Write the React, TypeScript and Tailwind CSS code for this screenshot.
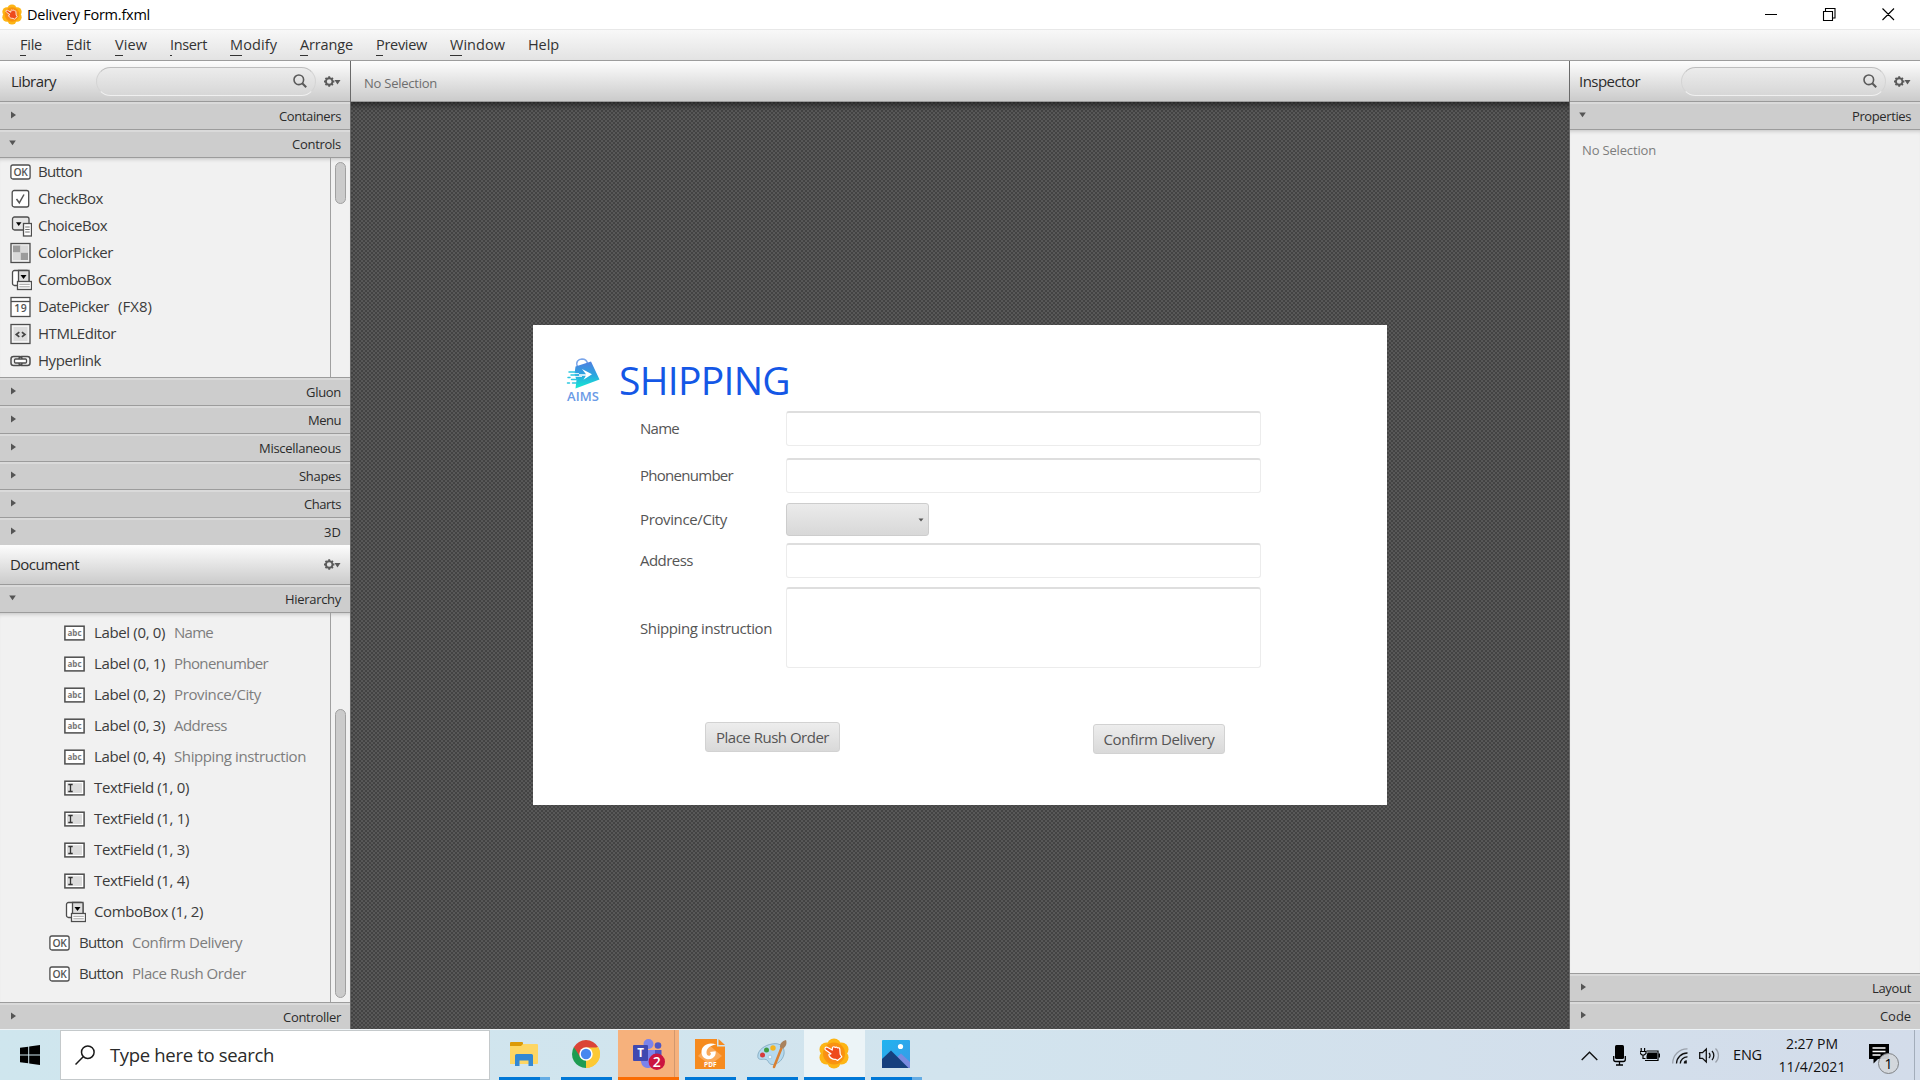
import { ReactNode, useLayoutEffect, useRef } from 'react';

/* Text that is tracked so that it fills the width given by its class. */
function T({ children, className }: { children: string; className: string }) {
  const outer = useRef<HTMLSpanElement>(null);
  const inner = useRef<HTMLSpanElement>(null);
  useLayoutEffect(() => {
    if (!outer.current || !inner.current) return;
    inner.current.style.letterSpacing = '0px';
    const extra = outer.current.clientWidth - inner.current.getBoundingClientRect().width;
    inner.current.style.letterSpacing = `${extra / children.length}px`;
  }, [children]);
  return (
    <span ref={outer} className={`block shrink-0 whitespace-pre ${className}`}>
      <span ref={inner} className="inline-block">{children}</span>
    </span>
  );
}

function SceneBuilderIcon({ className }: { className: string }) {
  return (
    <svg viewBox="0 0 30 30" className={className}>
      <g fill="#fdb515">
        <circle cx="15" cy="7" r="7" /><circle cx="22.5" cy="11" r="7" /><circle cx="22.5" cy="19" r="7" />
        <circle cx="15" cy="23" r="7" /><circle cx="7.5" cy="19" r="7" /><circle cx="7.5" cy="11" r="7" />
      </g>
      <circle cx="15" cy="15" r="11" fill="#f9940f" />
      <circle cx="15" cy="15" r="8.5" fill="#fb8a1a" />
      <path d="M6 9.800c.3-1.500 1.800-1.500 2.800-.8l4.400 2.600.3-2.600c.8-1.200 2-.8 2.600 0 .8-.8 2-.5 2.500.4 1-.4 2 0 2.200 1.200l.4 5.200 1.600 2.600-4.300 3.600-2-1.200c-3 .2-5-1-6.300-3.400-.8-1.300-.2-2.200 1.400-1.800L12 15.300 7 11.800c-.8-.5-1.200-1.200-1-2z" fill="#ee4a1c" stroke="#fff" strokeWidth="1.200" strokeLinejoin="round" />
    </svg>
  );
}

function SearchIcon() {
  return (
    <svg viewBox="0 0 14 14" className="h-[14px] w-[14px]" fill="none" stroke="#5a5a5a" strokeWidth="1.600">
      <circle cx="5.800" cy="5.800" r="4.800" /><path d="M9.200 9.200 13.200 13.300" strokeWidth="2" />
    </svg>
  );
}

function Gear() {
  return (
    <svg viewBox="0 0 17 11" className="h-[11px] w-[17px]">
      <circle cx="5.200" cy="5.500" r="3.300" fill="none" stroke="#5a5a5a" strokeWidth="1.900" />
      <path d="M5.200.3v2M5.200 8.700v2M0 5.500h2M8.400 5.500h2M1.500 1.800l1.300 1.300M7.600 7.900l1.300 1.300M8.900 1.800 7.600 3.100M2.800 7.900 1.500 9.200" stroke="#5a5a5a" strokeWidth="1.900" />
      <path d="M10.500 4h6l-3 4.500z" fill="#5a5a5a" />
    </svg>
  );
}

type Kind = 'button' | 'check' | 'choice' | 'color' | 'combo' | 'date' | 'html' | 'link' | 'label' | 'text';

function ControlIcon({ kind }: { kind: Kind }) {
  const s = '#4d4d4d';
  return (
    <svg viewBox="0 0 22 22" className="h-[22px] w-[22px] shrink-0" fill="none" stroke={s} strokeWidth="1.300">
      {kind === 'button' && (<>
        <rect x=".9" y="4" width="19.200" height="14" rx="2" fill="#fff" />
        <text x="10.500" y="14.700" textAnchor="middle" fontSize="10.300" letterSpacing="-.3" stroke="none" fill="#555" fontWeight="600" fontFamily="Open Sans, sans-serif">OK</text>
      </>)}
      {kind === 'check' && (<>
        <rect x="2.200" y="2.500" width="16.500" height="16.500" rx="2" fill="#fff" />
        <path d="M6.500 11l2.800 3.800L14 6.500" stroke="#555" strokeWidth="1.500" />
      </>)}
      {kind === 'choice' && (<>
        <rect x="2.500" y="2" width="16.500" height="13" rx="2" fill="#e6e6e6" />
        <path d="M6 7.300h5.500L8.700 11z" fill="#000" stroke="none" />
        <rect x="13.500" y="8.500" width="8" height="12.500" fill="#fff" />
        <path d="M15.200 12h4.500M15.200 14.500h4.500M15.200 17h4.500" strokeWidth=".8" />
      </>)}
      {kind === 'color' && (<>
        <rect x="1" y="1.500" width="19" height="19" fill="#eee" />
        <path d="M3 3.500h7.500v7H3zM10.500 10.500H18V18h-7.500z" fill="#9b9b9b" stroke="none" />
        <path d="M10.500 3.500H18v7h-7.500zM3 10.500h7.500V18H3z" fill="#d9d9d9" stroke="none" />
      </>)}
      {kind === 'combo' && (<>
        <rect x="2.500" y="1.500" width="16.500" height="15" rx="2" fill="#fff" />
        <path d="M8.500 1.500H19V14H8.500z" fill="#ddd" />
        <path d="M10.500 6h6l-3 4z" fill="#000" stroke="none" />
        <rect x="7.500" y="12.500" width="14" height="8" fill="#fff" />
        <path d="M9.300 15.300h10.500M9.300 17.800h10.500" strokeWidth=".8" stroke="#888" />
      </>)}
      {kind === 'date' && (<>
        <rect x="1" y="1.500" width="19" height="19" fill="#fff" />
        <path d="M1 5.500h19" />
        <text x="10.800" y="16.300" textAnchor="middle" fontSize="10.500" letterSpacing=".6" stroke="none" fill="#555" fontWeight="600" fontFamily="Open Sans, sans-serif">19</text>
      </>)}
      {kind === 'html' && (<>
        <rect x="1" y="1.500" width="19" height="19" fill="#f4f4f4" />
        <rect x="3.500" y="4" width="14" height="14" fill="#dcdcdc" stroke="none" />
        <path d="M9.300 9.200l-3 2.300 3 2.300M11.900 9.200l3 2.300-3 2.300" stroke="#444" strokeWidth="1.700" />
      </>)}
      {kind === 'link' && (<>
        <rect x="1" y="6.500" width="11" height="9" rx="2.500" strokeWidth="1.500" /><rect x="9" y="6.500" width="11" height="9" rx="2.500" strokeWidth="1.500" />
        <rect x="4.500" y="9" width="12" height="4" rx="1" fill="#fff" />
      </>)}
      {kind === 'label' && (<>
        <rect x=".9" y="4.200" width="19.200" height="13.700" fill="#fff" strokeWidth="1.500" />
        <text x="10.500" y="14.300" textAnchor="middle" fontSize="8" stroke="none" fill="#777" fontWeight="700" fontFamily="Open Sans, sans-serif">abc</text>
      </>)}
      {kind === 'text' && (<>
        <rect x=".9" y="4.200" width="19.200" height="13.700" fill="#fff" strokeWidth="1.500" />
        <rect x="3" y="6.200" width="15" height="9.700" fill="#dcdcdc" stroke="none" />
        <path d="M4.300 7.500H8.700M4.300 14.500H8.700M6.500 7.500v7" stroke="#333" strokeWidth="1.300" />
      </>)}
    </svg>
  );
}

function Section({ title, open, w, dark }: { title: string; open?: boolean; w: string; dark?: boolean }) {
  return (
    <div className={`flex h-[28px] shrink-0 items-center justify-between border-t-2 border-b border-t-[#dadada] bg-[#cdcdcd] pr-[9px] pl-[9px] ${dark ? 'border-b-[#6a6a6a]' : 'border-b-[#9c9c9c]'}`}>
      <svg viewBox="0 0 8 8" className={`h-[8px] w-[8px] ${open ? 'mb-[3px]' : 'mb-[4px]'}`}>
        {open ? <path d="M.2 1.500h6.600L3.500 6.200z" fill="#555" /> : <path d="M2 .5 7 4 2 7.500z" fill="#555" />}
      </svg>
      <T className={`-mt-[2px] text-[13px] leading-[20px] text-[#2b2b2b] ${w}`}>{title}</T>
    </div>
  );
}

function PanelHead({ children, className }: { children: ReactNode; className: string }) {
  return <div className={`flex shrink-0 items-center border-b border-[#9a9a9a] bg-linear-to-b from-[#fdfdfd] to-[#cbcbcb] ${className}`}>{children}</div>;
}

function Search({ className }: { className: string }) {
  return (
    <div className={`flex h-[29px] items-center justify-end rounded-full border border-t-[#bdbdbd] border-r-[#d4d4d4] border-b-[#f0f0f0] border-l-[#d4d4d4] bg-linear-to-b from-[#ececec] to-[#d7d7d7] pr-[8px] ${className}`}>
      <SearchIcon />
    </div>
  );
}

const menus = [
  { t: 'File', c: 'ml-[20px] w-[22px]', u: 'w-[6px]' },
  { t: 'Edit', c: 'ml-[24px] w-[25px]', u: 'w-[6px]' },
  { t: 'View', c: 'ml-[24px] w-[32px]', u: 'w-[8px]' },
  { t: 'Insert', c: 'ml-[23px] w-[37px]', u: 'w-[2px]' },
  { t: 'Modify', c: 'ml-[23px] w-[47px]', u: 'w-[12px]' },
  { t: 'Arrange', c: 'ml-[23px] w-[53px]', u: 'w-[8px]' },
  { t: 'Preview', c: 'ml-[23px] w-[51px]', u: 'w-[7px]' },
  { t: 'Window', c: 'ml-[23px] w-[55px]', u: 'w-[12px]' },
  { t: 'Help', c: 'ml-[23px] w-[31px]', u: 'w-0' },
];

const library: { k: Kind; t: string; w: string; extra?: string }[] = [
  { k: 'button', t: 'Button', w: 'w-[44px]' },
  { k: 'check', t: 'CheckBox', w: 'w-[65px]' },
  { k: 'choice', t: 'ChoiceBox', w: 'w-[69px]' },
  { k: 'color', t: 'ColorPicker', w: 'w-[75px]' },
  { k: 'combo', t: 'ComboBox', w: 'w-[73px]' },
  { k: 'date', t: 'DatePicker', w: 'w-[71px]', extra: '(FX8)' },
  { k: 'html', t: 'HTMLEditor', w: 'w-[78px]' },
  { k: 'link', t: 'Hyperlink', w: 'w-[63px]' },
];

const tree: { k: Kind; t: string; w: string; d?: string; dw?: string }[] = [
  { k: 'label', t: 'Label (0, 0)', w: 'w-[71px]', d: 'Name', dw: 'w-[39px]' },
  { k: 'label', t: 'Label (0, 1)', w: 'w-[71px]', d: 'Phonenumber', dw: 'w-[94px]' },
  { k: 'label', t: 'Label (0, 2)', w: 'w-[71px]', d: 'Province/City', dw: 'w-[87px]' },
  { k: 'label', t: 'Label (0, 3)', w: 'w-[71px]', d: 'Address', dw: 'w-[53px]' },
  { k: 'label', t: 'Label (0, 4)', w: 'w-[71px]', d: 'Shipping instruction', dw: 'w-[132px]' },
  { k: 'text', t: 'TextField (1, 0)', w: 'w-[95px]' },
  { k: 'text', t: 'TextField (1, 1)', w: 'w-[95px]' },
  { k: 'text', t: 'TextField (1, 3)', w: 'w-[95px]' },
  { k: 'text', t: 'TextField (1, 4)', w: 'w-[95px]' },
  { k: 'combo', t: 'ComboBox (1, 2)', w: 'w-[109px]' },
  { k: 'button', t: 'Button', w: 'w-[44px]', d: 'Confirm Delivery', dw: 'w-[110px]' },
  { k: 'button', t: 'Button', w: 'w-[44px]', d: 'Place Rush Order', dw: 'w-[114px]' },
];

function LeftPanel() {
  return (
    <aside className="flex w-[351px] shrink-0 flex-col border-r border-[#6a6a6a] bg-[#f1f1f1]">
      <PanelHead className="h-[41px]">
        <T className="ml-[11px] w-[45px] text-[15px] text-[#2b2b2b]">Library</T>
        <Search className="ml-[40px] w-[220px]" />
        <span className="ml-[8px]"><Gear /></span>
      </PanelHead>
      <Section title="Containers" w="w-[62px]" />
      <Section title="Controls" w="w-[49px]" open />
      <div className="flex h-[220px] shrink-0 border-b border-[#9c9c9c] shadow-[inset_0_4px_4px_-3px_rgba(0,0,0,0.2)]">
        <ul className="w-[330px] pl-[10px]">
          {library.map((r) => (
            <li key={r.t} className="flex h-[27px] items-center text-[15px] text-[#3c3c3c]">
              <ControlIcon kind={r.k} />
              <T className={`ml-[6px] ${r.w}`}>{r.t}</T>
              {r.extra && <T className="ml-[9px] w-[34px]">{r.extra}</T>}
            </li>
          ))}
        </ul>
        <div className="flex-1 border-l border-[#a0a0a0] pt-[4px] pl-[4px]">
          <div className="h-[42px] w-[11px] rounded-full border border-[#a0a0a0] bg-[#cbcbcb]" />
        </div>
      </div>
      <Section title="Gluon" w="w-[35px]" />
      <Section title="Menu" w="w-[33px]" />
      <Section title="Miscellaneous" w="w-[82px]" />
      <Section title="Shapes" w="w-[42px]" />
      <Section title="Charts" w="w-[37px]" />
      <div className="-mb-px"><Section title="3D" w="w-[17px]" dark /></div>
      <PanelHead className="h-[40px] justify-between pr-[9px] pl-[10px]">
        <T className="w-[69px] text-[15px] text-[#2b2b2b]">Document</T>
        <Gear />
      </PanelHead>
      <Section title="Hierarchy" w="w-[56px]" open />
      <div className="flex flex-1 border-b border-[#9c9c9c] shadow-[inset_0_4px_4px_-3px_rgba(0,0,0,0.2)]">
        <ul className="w-[330px] pt-[4px]">
          {tree.map((r, i) => (
            <li key={i} className={`flex h-[31px] items-center text-[15px] ${r.k === 'button' ? 'pl-[49px]' : 'pl-[64px]'}`}>
              <ControlIcon kind={r.k} />
              <T className={`ml-[8px] text-[#3c3c3c] ${r.w}`}>{r.t}</T>
              {r.d && <T className={`ml-[9px] text-[#7d7d7d] ${r.dw}`}>{r.d}</T>}
            </li>
          ))}
        </ul>
        <div className="flex-1 border-l border-[#a0a0a0] pt-[96px] pl-[4px]">
          <div className="h-[289px] w-[11px] rounded-full border border-[#a0a0a0] bg-[#cbcbcb]" />
        </div>
      </div>
      <div className="h-[26px] overflow-hidden"><Section title="Controller" w="w-[58px]" /></div>
    </aside>
  );
}

function Logo() {
  return (
    <div className="flex w-[34px] flex-col items-center">
      <svg viewBox="0 0 34 31" className="h-[31px] w-[34px]">
        <defs>
          <linearGradient id="bag" x1="0" y1="0" x2="0" y2="1">
            <stop offset="0" stopColor="#4f7fe0" /><stop offset=".5" stopColor="#2aa6e0" /><stop offset="1" stopColor="#14ecd2" />
          </linearGradient>
        </defs>
        <path d="M11.500 8.500C9.500 4 12 1 16 .9c4 0 5 2 5.500 4.500" fill="none" stroke="#7aa5ea" strokeWidth="1.500" />
        <path d="M9.500 8.500 25 3.500 33.500 21.500 9.500 30.500 10.500 22l-2-6z" fill="url(#bag)" />
        <path d="M16 11l10 5.200-8.500 5.600 2.300-4.100H13v-1.400h7z" fill="#fff" />
        <path d="M3 15.600h10M7 18.400h9M2 20.800h5" stroke="#fff" strokeWidth=".9" />
        <path d="M3 14h6M5 17h5M2 19.500h2M5.500 21.500h6M1.500 25h2M6.500 25h4" stroke="#2bc7e0" strokeWidth="1.500" strokeLinecap="round" />
      </svg>
      <T className="mt-px w-[32px] text-[13px] leading-[13px] font-semibold text-[#6a9ae6]">AIMS</T>
    </div>
  );
}

const fieldBox = 'rounded-[3px] border border-t-2 border-[#ececec] border-t-[#dedede] bg-white';
const btnBox = 'flex items-center justify-center rounded-[3px] border border-[#d2d2d2] bg-linear-to-b from-[#ededed] to-[#d9d9d9] text-[15px] text-[#555]';

function FormPreview() {
  return (
    <div className="flex h-[480px] w-[854px] flex-col bg-white">
      <div className="flex h-[86px] shrink-0 items-start pt-[33px] pl-[33px]">
        <Logo />
        <T className="-mt-[6px] ml-[19px] w-[171px] text-[39px] leading-[55px] text-[#1457e6]">SHIPPING</T>
      </div>
      <div className="ml-[107px] grid w-[621px] grid-cols-[146px_475px] items-center text-[15px] text-[#555]">
        <T className="-mt-px w-[39px]">Name</T><div className={`h-[35px] ${fieldBox}`} />
        <T className="mt-[11px] w-[93px]">Phonenumber</T><div className={`mt-[12px] h-[35px] ${fieldBox}`} />
        <T className="mt-[9px] w-[87px]">Province/City</T>
        <div className="mt-[10px] flex h-[33px] w-[143px] items-center justify-end rounded-[3px] border border-[#cdcdcd] bg-linear-to-b from-[#ebebeb] to-[#d8d8d8] pr-[4px]">
          <svg viewBox="0 0 6 4" className="h-[4px] w-[6px]"><path d="M.5.500h5L3 3.500z" fill="#555" /></svg>
        </div>
        <T className="mt-[6px] w-[53px]">Address</T><div className={`mt-[7px] h-[35px] ${fieldBox}`} />
        <T className="mt-[10px] w-[132px]">Shipping instruction</T><div className={`mt-[9px] h-[81px] ${fieldBox}`} />
      </div>
      <div className="mt-[54px] flex items-start">
        <div className={`ml-[172px] h-[30px] w-[135px] ${btnBox}`}><T className="w-[113px]">Place Rush Order</T></div>
        <div className={`mt-[2px] ml-[253px] h-[30px] w-[132px] ${btnBox}`}><T className="w-[111px]">Confirm Delivery</T></div>
      </div>
    </div>
  );
}

function Task({ children, bar, className }: { children: ReactNode; bar: ReactNode; className: string }) {
  return (
    <div className={`flex h-[50px] shrink-0 flex-col justify-between ${className}`}>
      <div className="flex flex-1 items-center justify-center">{children}</div>
      <div className="flex h-[3px]">{bar}</div>
    </div>
  );
}

const blue = <div className="flex-1 bg-[#0078d7]" />;
const blueSplit = <><div className="w-[41px] bg-[#0078d7]" /><div className="flex-1 bg-[#64ace4]" /></>;

function Taskbar() {
  return (
    <footer className="flex h-[51px] shrink-0 items-start border-t border-[#eef3f6] bg-linear-to-r from-[#cfe6ee] via-[#d2e4ee] to-[#d3dcea]">
      <div className="flex h-[50px] w-[60px] items-center justify-center">
        <svg viewBox="0 0 20 20" className="h-[20px] w-[20px]"><path d="M0 2.800 8.200 1.700v7.800H0zM9.200 1.500 20 0v9.500H9.200zM0 10.500h8.200v7.800L0 17.200zM9.200 10.500H20V20L9.200 18.500z" /></svg>
      </div>
      <div className="flex h-[50px] w-[430px] items-center border border-[#c4c9cb] bg-white">
        <svg viewBox="0 0 20 20" className="ml-[14px] h-[20px] w-[20px]" fill="none" stroke="#1a1a1a" strokeWidth="1.500"><circle cx="12.800" cy="7.200" r="6.300" /><path d="M8.200 11.800.5 19.500" /></svg>
        <T className="ml-[15px] w-[164px] text-[18.500px] text-[#2a2a2a]">Type here to search</T>
      </div>
      <Task className="ml-[9px] w-[51px]" bar={blueSplit}>
        <svg viewBox="0 0 28 24" className="mr-[2px] h-[24px] w-[28px]">
          <rect x="0" y="0" width="13" height="9" rx="1" fill="#dc9a07" />
          <path d="M0 4h11l2-2h14a1 1 0 0 1 1 1v18a1 1 0 0 1-1 1H0z" fill="#fdd663" />
          <path d="M5 24V13.500a1.500 1.500 0 0 1 1.500-1.500h15a1.500 1.500 0 0 1 1.500 1.500V24h-4.500v-5.500h-9V24z" fill="#3388d3" />
        </svg>
      </Task>
      <Task className="ml-[11px] w-[51px]" bar={blue}>
        <svg viewBox="0 0 28 28" className="mr-[2px] h-[28px] w-[28px]">
          <path d="M14 14 1.900 7A14 14 0 0 1 26.100 7z" fill="#db4437" />
          <path d="M14 14 26.100 7A14 14 0 0 1 14 28z" fill="#fcc934" />
          <path d="M14 14v0L14 28A14 14 0 0 1 1.900 7z" fill="#1e9c52" />
          <path d="M14 7.500H26.400A14 14 0 0 1 14 28l5.600-10.700z" fill="#fcc934" />
          <path d="M1.900 7 8.500 17.500 14 7.500z" fill="#db4437" />
          <circle cx="14" cy="14" r="6.700" fill="#fff" /><circle cx="14" cy="14" r="5.200" fill="#4587f0" />
        </svg>
      </Task>
      <Task className="ml-[6px] w-[61px] bg-[#f6b17c]" bar={<div className="flex-1 bg-[#fb6c02]" />}>
        <div className="mr-[4px] flex h-full w-[57px] items-center justify-center border-r border-[#d2986e] pl-[6px]">
          <svg viewBox="0 0 32 31" className="mt-px h-[31px] w-[32px]">
            <circle cx="25" cy="6.500" r="3.300" fill="#4f56c3" /><circle cx="15.500" cy="5" r="5" fill="#7b83eb" />
            <path d="M21 11h7.500v9a5 5 0 0 1-7.500 3z" fill="#4f56c3" /><path d="M8 11h14v10a7 7 0 0 1-14 2z" fill="#7b83eb" />
            <rect x="0" y="6" width="15" height="16" rx="1" fill="#4049b0" />
            <text x="7.500" y="18" fontSize="11.500" fontWeight="700" fill="#fff" textAnchor="middle" fontFamily="Open Sans, sans-serif">T</text>
            <circle cx="23.800" cy="22.800" r="8.200" fill="#cb1440" />
            <text x="23.800" y="27.700" fontSize="14" fontWeight="600" fill="#fff" textAnchor="middle" fontFamily="Open Sans, sans-serif">2</text>
          </svg>
        </div>
      </Task>
      <Task className="ml-[6px] w-[51px]" bar={blue}>
        <svg viewBox="0 0 30 30" className="mr-px h-[30px] w-[30px]">
          <path d="M0 0h22v7.500h8V30H0z" fill="#f68b1f" /><path d="M23.500 0 30 6h-6.500z" fill="#f68b1f" />
          <path d="M14 6 27 17 15 26 3 17z" fill="#f9a95a" />
          <path d="M21.500 5.500C13 2.500 6.500 6.500 6.500 13c0 6.500 6.500 8.700 11 6.300 2.800-1.600 3.400-4.300 3.200-7l-6 .8c1 .8 1.500 1.200 1 2.500-.8 2-4.200 1.700-4.200-2 0-4.600 4-7.400 10-8.100z" fill="#fff" />
          <text x="15.300" y="27.700" fontSize="6.500" fontWeight="700" fill="#fff" textAnchor="middle" fontFamily="Open Sans, sans-serif">PDF</text>
        </svg>
      </Task>
      <Task className="ml-[11px] w-[51px]" bar={blue}>
        <svg viewBox="0 0 30 30" className="mr-[2px] h-[30px] w-[30px]">
          <path d="M15 5C24 3 28 9 27 15c-1 6-7 11-12 10.500-4-.5-3-4-6-5C6 19.500 1 22 .8 17.500.5 11 8 6 15 5z" fill="#b5d9ee" stroke="#7ea6bd" strokeWidth=".8" />
          <circle cx="13" cy="18" r="1.800" fill="#f0f7fb" stroke="#8ab0c4" strokeWidth=".5" />
          <circle cx="5.500" cy="16" r="2.500" fill="#d63b3b" /><circle cx="9.500" cy="11" r="2.500" fill="#3f9c42" /><circle cx="16" cy="9" r="2.700" fill="#f4b41f" />
          <path d="M17 28 24.500 9" stroke="#d98032" strokeWidth="2.500" strokeLinecap="round" />
          <path d="M23 8.500C22.500 5 25 2 29 1c1 3 .5 6-2.800 8.500z" fill="#a9825c" />
        </svg>
      </Task>
      <Task className="ml-[6px] w-[61px] bg-[#ecf4f7]" bar={blue}><SceneBuilderIcon className="mr-px h-[31px] w-[30px]" /></Task>
      <Task className="ml-[6px] w-[51px]" bar={blueSplit}>
        <svg viewBox="0 0 28 28" className="mr-[2px] h-[28px] w-[28px]">
          <defs><linearGradient id="sky" x1="0" y1="0" x2="1" y2="1"><stop offset="0" stopColor="#1fb4f0" /><stop offset="1" stopColor="#3a9ae6" /></linearGradient></defs>
          <rect width="28" height="28" rx="1" fill="url(#sky)" />
          <path d="M13 19 19 13.500 28 22v6H13z" fill="#7a8be0" />
          <path d="M0 19 9 10.500 26.500 28H0z" fill="#16407e" /><circle cx="18.500" cy="6.500" r="2.600" fill="#fff" />
        </svg>
      </Task>
      <div className="ml-auto flex h-[50px] items-center">
        <svg viewBox="0 0 17 10" className="mt-px h-[10px] w-[17px]" fill="none" stroke="#111" strokeWidth="1.400"><path d="M.7 9 8.500 1.200 16.300 9" /></svg>
        <svg viewBox="0 0 13 21" className="ml-[15px] h-[21px] w-[13px]"><rect x="2" y="0" width="9" height="14" rx="1.500" /><path d="M.7 11v3.500a2 2 0 0 0 2 2h7.600a2 2 0 0 0 2-2V11M6.500 16.500v3.500M3 20h7" fill="none" stroke="#000" strokeWidth="1.300" /></svg>
        <svg viewBox="0 0 20 14" className="ml-[14px] h-[14px] w-[20px]"><path d="M1.200 0v3M4.600 0v3M0 3.500h6v2L4.200 7H2L.3 5.500zM3 7v3.500h2.500" fill="none" stroke="#000" strokeWidth="1.200" /><path d="M6.500 3H18v9.500H5" fill="none" stroke="#000" strokeWidth="1.200" /><path d="M7.500 4.500H17V11H6.500V8z" /><path d="M18.500 5.500H20v4h-1.500z" /></svg>
        <svg viewBox="0 0 16 16" className="mt-px ml-[12px] h-[16px] w-[16px]" fill="none" strokeWidth="1.300"><path d="M.7 15.500A14.500 14.500 0 0 1 15.500.9" stroke="#9aa1ab" /><path d="M4.500 15.500A10.800 10.800 0 0 1 15.500 5M8.300 15.500A7 7 0 0 1 15.500 8.800" stroke="#111" /><path d="M11.800 15.500h3V12.300A3 3 0 0 0 11.800 15.500z" fill="#111" /></svg>
        <svg viewBox="0 0 21 17" className="ml-[11px] h-[17px] w-[21px]" fill="none" stroke="#111" strokeWidth="1.300"><path d="M.7 5.700h2.800L7.300 2v13L3.500 11.300H.7zM10 6a3.500 3.500 0 0 1 0 5M13 4a6.500 6.500 0 0 1 0 9" /><path d="M16.500 1.500a9.800 9.800 0 0 1 0 14" stroke="#9aa1ab" /></svg>
        <T className="ml-[13px] w-[29px] text-[14.500px] text-[#111]">ENG</T>
        <div className="ml-[16px] flex w-[68px] flex-col items-center text-[14px] leading-[23px] text-[#111]">
          <T className="w-[52px]">2:27 PM</T><T className="w-[67px]">11/4/2021</T>
        </div>
        <svg viewBox="0 0 32 32" className="mt-[6px] ml-[22px] h-[32px] w-[32px]">
          <path d="M1 2h20v15H10l-4.500 4.500V17H1z" /><path d="M4.500 6h13M4.500 9.500h13M4.500 13h8" stroke="#fff" strokeWidth="1.300" />
          <circle cx="20.500" cy="21.500" r="10" fill="#d3d6da" fillOpacity=".93" stroke="#7f8285" strokeWidth="1" />
          <text x="20.500" y="26.500" fontSize="14" textAnchor="middle" fill="#000" fontFamily="Open Sans, sans-serif">1</text>
        </svg>
        <div className="ml-[14px] h-[50px] w-[6px] border-l border-[#a3adba]" />
      </div>
    </footer>
  );
}

export default function App() {
  return (
    <div className="flex h-[1080px] w-[1920px] flex-col overflow-hidden bg-white [font-family:'Open_Sans','Noto_Sans',sans-serif]">
      <header className="flex h-[30px] shrink-0 items-center border-b border-[#e8e8e8] bg-white">
        <SceneBuilderIcon className="ml-[2px] h-[21px] w-[20px]" />
        <T className="ml-[5px] w-[123px] text-[14.500px] text-black">Delivery Form.fxml</T>
        <svg viewBox="0 0 130 13" className="mr-[25px] ml-auto h-[13px] w-[130px]" fill="none" stroke="#000" strokeWidth="1.100">
          <path d="M0 6.500h12M58.500 3.500h9v9h-9zM60.500 3.500v-3h9.500v9.500h-2.500M117.500.5l11.500 11.500M129 .5 117.500 12" />
        </svg>
      </header>
      <nav className="flex h-[31px] shrink-0 items-center border-b border-[#9c9c9c] bg-linear-to-b from-[#f8f8f8] to-[#e3e3e3]">
        {menus.map((m) => (
          <div key={m.t} className={`relative ${m.c}`}>
            <T className="w-full text-[14.500px] leading-[30px] text-[#333]">{m.t}</T>
            <div className={`absolute bottom-[4px] left-0 h-px bg-[#333] ${m.u}`} />
          </div>
        ))}
      </nav>
      <main className="flex h-[968px] shrink-0">
        <LeftPanel />
        <section className="flex flex-1 flex-col">
          <PanelHead className="h-[41px]"><T className="mt-[5px] ml-[13px] w-[73px] text-[13px] text-[#6e6e6e]">No Selection</T></PanelHead>
          <div className="flex-1 bg-[#4c4c4c] bg-[conic-gradient(#434343_25%,#585858_0_50%,#434343_0_75%,#585858_0)] bg-[size:4px_4px] pt-[223px] pl-[182px] shadow-[inset_0_7px_6px_-4px_rgba(0,0,0,0.5)]">
            <FormPreview />
          </div>
        </section>
        <aside className="flex w-[351px] shrink-0 flex-col border-l border-[#6a6a6a] bg-[#f1f1f1]">
          <PanelHead className="h-[41px]">
            <T className="ml-[9px] w-[61px] text-[15px] text-[#2b2b2b]">Inspector</T>
            <Search className="ml-[41px] w-[205px]" />
            <span className="ml-[8px]"><Gear /></span>
          </PanelHead>
          <Section title="Properties" w="w-[59px]" open />
          <div className="flex-1 border-b border-[#9c9c9c] pt-[11px] pl-[12px] shadow-[inset_0_4px_4px_-3px_rgba(0,0,0,0.2)]">
            <T className="w-[74px] text-[13px] text-[#7d7d7d]">No Selection</T>
          </div>
          <Section title="Layout" w="w-[39px]" />
          <div className="-mb-px"><Section title="Code" w="w-[31px]" dark /></div>
        </aside>
      </main>
      <Taskbar />
    </div>
  );
}
